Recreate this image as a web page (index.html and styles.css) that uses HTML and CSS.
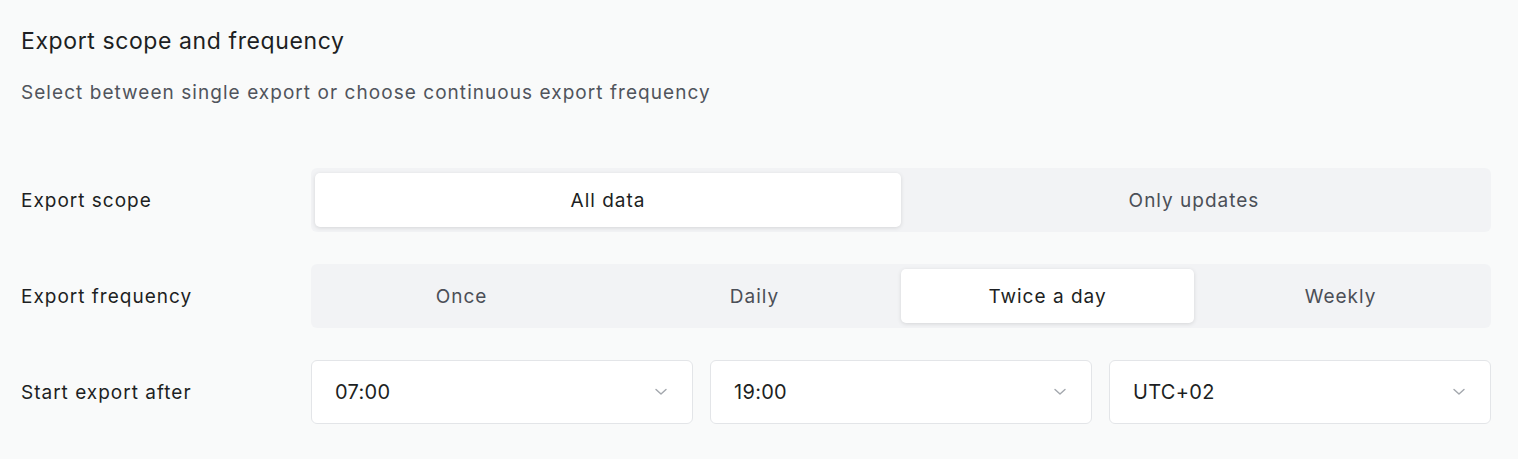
FILE: index.html
```html
<!DOCTYPE html>
<html>
<head>
<meta charset="utf-8">
<link rel="stylesheet" href="styles.css">
</head>
<body>
<div class="page">
  <h1 class="title">Export scope and frequency</h1>
  <p class="subtitle">Select between single export or choose continuous export frequency</p>
  <div class="rows">
    <div class="row">
      <div class="label">Export scope</div>
      <div class="seg">
        <div class="opt active">All data</div>
        <div class="opt">Only updates</div>
      </div>
    </div>
    <div class="row">
      <div class="label">Export frequency</div>
      <div class="seg">
        <div class="opt">Once</div>
        <div class="opt">Daily</div>
        <div class="opt active">Twice a day</div>
        <div class="opt">Weekly</div>
      </div>
    </div>
    <div class="row">
      <div class="label">Start export after</div>
      <div class="selects">
        <div class="select"><span>07:00</span><svg class="chev" width="12" height="8" viewBox="0 0 12 8"><path d="M1 1.5 6 6 11 1.5" fill="none" stroke="#a3a7ad" stroke-width="1.4" stroke-linecap="round" stroke-linejoin="round"/></svg></div>
        <div class="select"><span>19:00</span><svg class="chev" width="12" height="8" viewBox="0 0 12 8"><path d="M1 1.5 6 6 11 1.5" fill="none" stroke="#a3a7ad" stroke-width="1.4" stroke-linecap="round" stroke-linejoin="round"/></svg></div>
        <div class="select"><span>UTC+02</span><svg class="chev" width="12" height="8" viewBox="0 0 12 8"><path d="M1 1.5 6 6 11 1.5" fill="none" stroke="#a3a7ad" stroke-width="1.4" stroke-linecap="round" stroke-linejoin="round"/></svg></div>
      </div>
    </div>
  </div>
</div>
</body>
</html>
```
FILE: styles.css
```css
html, body {
  margin: 0;
  padding: 0;
  background: #f9fafa;
}
body {
  font-family: Inter, "Liberation Sans", sans-serif;
  color: #1d1f23;
}
.page {
  padding: 26px 27px 0 21px;
}
.title {
  margin: 0;
  font-size: 23px;
  font-weight: 400;
  line-height: 30px;
  letter-spacing: 0.6px;
  color: #1d1f23;
}
.subtitle {
  margin: 24px 0 0;
  font-size: 19px;
  line-height: 26px;
  color: #50545c;
  letter-spacing: 1.05px;
}
.rows {
  margin-top: 62px;
  display: flex;
  flex-direction: column;
  gap: 32px;
}
.row {
  display: flex;
  align-items: center;
}
.label {
  width: 290px;
  flex: none;
  font-size: 19px;
  letter-spacing: 1px;
  color: #1d1f23;
}
.seg {
  flex: 1;
  display: flex;
  background: #f2f3f5;
  border-radius: 6px;
  padding: 5px 4px;
  height: 64px;
  box-sizing: border-box;
}
.opt {
  flex: 1;
  display: flex;
  align-items: center;
  justify-content: center;
  font-size: 19px;
  letter-spacing: 1px;
  color: #4b4f57;
  border-radius: 5px;
}
.opt.active {
  background: #fff;
  color: #1d1f23;
  box-shadow: 0 1px 4px rgba(0,0,0,0.12);
}
.selects {
  flex: 1;
  display: flex;
  gap: 17px;
}
.select {
  flex: 1;
  height: 64px;
  box-sizing: border-box;
  background: #fff;
  border: 1px solid #e3e5e8;
  border-radius: 6px;
  display: flex;
  align-items: center;
  justify-content: space-between;
  padding: 0 25px 0 23px;
  font-size: 20px;
  letter-spacing: 0.3px;
  color: #1d1f23;
}
.chev {
  display: block;
}
```
